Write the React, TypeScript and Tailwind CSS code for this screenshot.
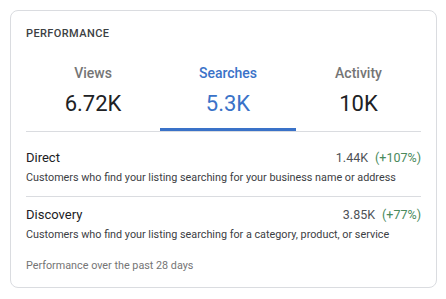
export default function App() {
  const rows = [
    {
      title: "Direct",
      value: "1.44K",
      change: "(+107%)",
      desc: "Customers who find your listing searching for your business name or address",
    },
    {
      title: "Discovery",
      value: "3.85K",
      change: "(+77%)",
      desc: "Customers who find your listing searching for a category, product, or service",
    },
  ];
  return (
    <div className="bg-white w-[446px] h-[299px] pl-[10px] pt-[10px]" style={{ fontFamily: "Roboto, Arial, sans-serif" }}>
      <div className="w-[427px] border border-[#dadce0] rounded-[8px] px-[15px] pt-[15px] pb-[13px]">
        <div className="text-[11px] leading-[16px] font-medium tracking-[0.4px] text-[#3c4043]">PERFORMANCE</div>
        <div className="mt-[20.5px] grid grid-cols-[134px_136px_1fr] border-b border-[#dadce0]">
          <div className="flex flex-col items-center pb-[13.5px]">
            <div className="text-[14px] leading-[20px] font-medium text-[#757575]">Views</div>
            <div className="mt-[7px] text-[22px] leading-[28px] text-[#202124]">6.72K</div>
          </div>
          <div className="flex flex-col items-center pb-[10.5px] border-b-[3px] border-[#3a72c8]">
            <div className="text-[14px] leading-[20px] font-medium text-[#3a72c8]">Searches</div>
            <div className="mt-[7px] text-[22px] leading-[28px] text-[#3a72c8]">5.3K</div>
          </div>
          <div className="flex flex-col items-center pb-[13.5px]">
            <div className="text-[14px] leading-[20px] font-medium text-[#757575]">Activity</div>
            <div className="mt-[7px] text-[22px] leading-[28px] text-[#202124]">10K</div>
          </div>
        </div>
        <div className="mt-[7.5px]">
          {rows.map((r, i) => (
            <div key={r.title} className={`pt-[9px] ${i === 0 ? "pb-[10.5px] border-b border-[#dadce0]" : "pb-0"}`}>
              <div className="flex justify-between items-center text-[13px] leading-[18px]">
                <span className="text-[#202124]">{r.title}</span>
                <span className="text-[12.5px] text-[#4d5156]">
                  {r.value}
                  <span className="ml-[7px] text-[#4a8a5c]">{r.change}</span>
                </span>
              </div>
              <div className="mt-[3px] text-[10.8px] leading-[16px] text-[#3c4043]">{r.desc}</div>
            </div>
          ))}
        </div>
        <div className="mt-[15px] text-[10.8px] leading-[16px] text-[#757575]">Performance over the past 28 days</div>
      </div>
    </div>
  );
}
